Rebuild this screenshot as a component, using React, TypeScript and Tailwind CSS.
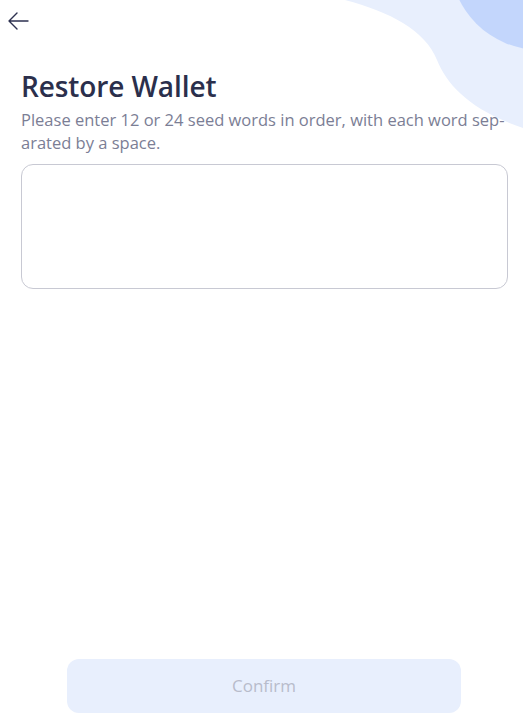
import React from "react";

export default function App() {
  return (
    <div
      className="relative w-[523px] h-[727px] overflow-hidden bg-white flex flex-col"
      style={{ fontFamily: '"Open Sans", "Noto Sans", sans-serif' }}
    >
      <svg
        className="absolute top-0 left-0 pointer-events-none"
        width="523"
        height="140"
        viewBox="0 0 523 140"
      >
        <path
          d="M345,0 C390,12 425,30 437,60 C447,85 470,110 523,128 L523,0 Z"
          fill="#e8effd"
        />
        <circle cx="540" cy="-40" r="90" fill="#c3d6fc" />
      </svg>

      <div className="relative flex flex-col flex-1">
        <button className="ml-[6px] mt-[10px] w-[24px] h-[22px] flex items-center justify-center">
          <svg width="22" height="20" viewBox="0 0 22 20" fill="none">
            <path
              d="M21 10 H2 M10 2 L2 10 L10 18"
              stroke="#2d3150"
              strokeWidth="1.4"
              strokeLinecap="round"
              strokeLinejoin="round"
            />
          </svg>
        </button>

        <div className="px-[21px] mt-[37px]">
          <h1 className="text-[28px] leading-[34px] font-semibold text-[#2b2f4c] tracking-[-0.1px]">
            Restore Wallet
          </h1>
          <p className="mt-[5px] text-[16.5px] leading-[23px] text-[#7b7e95] whitespace-nowrap">
            Please enter 12 or 24 seed words in order, with each word sep-
            <br />
            arated by a space.
          </p>
          <textarea className="mt-[10px] block w-[487px] h-[125px] rounded-[12px] border border-[#c8c9d3] resize-none outline-none p-3 text-[15px] text-[#2b2f4c]" />
        </div>

        <div className="flex-1" />

        <div className="flex mb-[14px] pl-[67px]">
          <button className="w-[394px] h-[54px] rounded-[12px] bg-[#e8effd] text-[17px] text-[#b8bccb] font-medium">
            Confirm
          </button>
        </div>
      </div>
    </div>
  );
}
